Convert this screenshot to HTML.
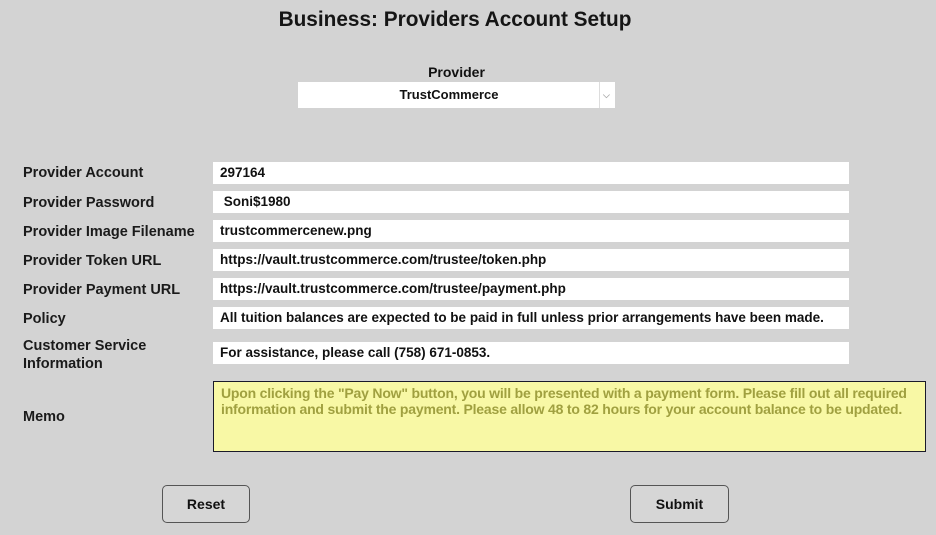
<!DOCTYPE html>
<html><head><meta charset="utf-8"><style>
body{margin:0;width:936px;height:535px;background:#d3d3d3;font-family:"Liberation Sans",sans-serif;position:relative;overflow:hidden;color:#111}
.a{position:absolute}
h1{position:absolute;left:0;width:910px;top:8px;margin:0;text-align:center;font-size:20.8px;font-weight:bold;color:#151515}
.lbl{position:absolute;left:23px;font-size:14.5px;font-weight:bold;color:#1a1a1a}
.in{position:absolute;left:213px;width:636px;height:22px;background:#fff;font-size:13.5px;font-weight:bold;line-height:22px;padding-left:7px;box-sizing:border-box;color:#111}
.btn{position:absolute;top:485px;height:38px;border:1px solid #555;border-radius:5px;background:#d6d6d6;box-sizing:border-box;font-size:14px;font-weight:bold;text-align:center;line-height:36px}
</style></head><body>
<h1>Business: Providers Account Setup</h1>
<div class="a" style="left:298px;width:317px;top:64px;text-align:center;font-size:14px;font-weight:bold">Provider</div>
<div class="a" style="left:298px;top:82px;width:317px;height:26px;background:#fff;font-size:13px;font-weight:bold;line-height:26px">
<div style="width:302px;text-align:center">TrustCommerce</div>
<div class="a" style="left:301px;top:0;width:1px;height:26px;background:#ddd"></div>
<div class="a" style="left:305px;top:0;font-size:9px;color:#aaa">&#x2335;</div>
</div>
<div class="lbl" style="top:165px">Provider Account</div><div class="in" style="top:162px">297164</div>
<div class="lbl" style="top:195px">Provider Password</div><div class="in" style="top:191px">&nbsp;Soni$1980</div>
<div class="lbl" style="top:224px">Provider Image Filename</div><div class="in" style="top:220px">trustcommercenew.png</div>
<div class="lbl" style="top:253px">Provider Token URL</div><div class="in" style="top:249px">https://vault.trustcommerce.com/trustee/token.php</div>
<div class="lbl" style="top:282px">Provider Payment URL</div><div class="in" style="top:278px">https://vault.trustcommerce.com/trustee/payment.php</div>
<div class="lbl" style="top:311px">Policy</div><div class="in" style="top:307px">All tuition balances are expected to be paid in full unless prior arrangements have been made.</div>
<div class="lbl" style="top:337px;line-height:18px">Customer Service<br>Information</div><div class="in" style="top:342px">For assistance, please call (758) 671-0853.</div>
<div class="lbl" style="top:409px">Memo</div>
<div class="a" style="left:213px;top:381px;width:713px;height:71px;background:#f8f8a5;border:1px solid #1a1a2a;box-sizing:border-box;padding:3px 7px;font-size:14px;font-weight:bold;color:#a0a040;line-height:16px;letter-spacing:-0.2px">Upon clicking the "Pay Now" button, you will be presented with a payment form. Please fill out all required information and submit the payment. Please allow 48 to 82 hours for your account balance to be updated.</div>
<div class="btn" style="left:162px;width:88px">Reset</div>
<div class="btn" style="left:630px;width:99px">Submit</div>
</body></html>
